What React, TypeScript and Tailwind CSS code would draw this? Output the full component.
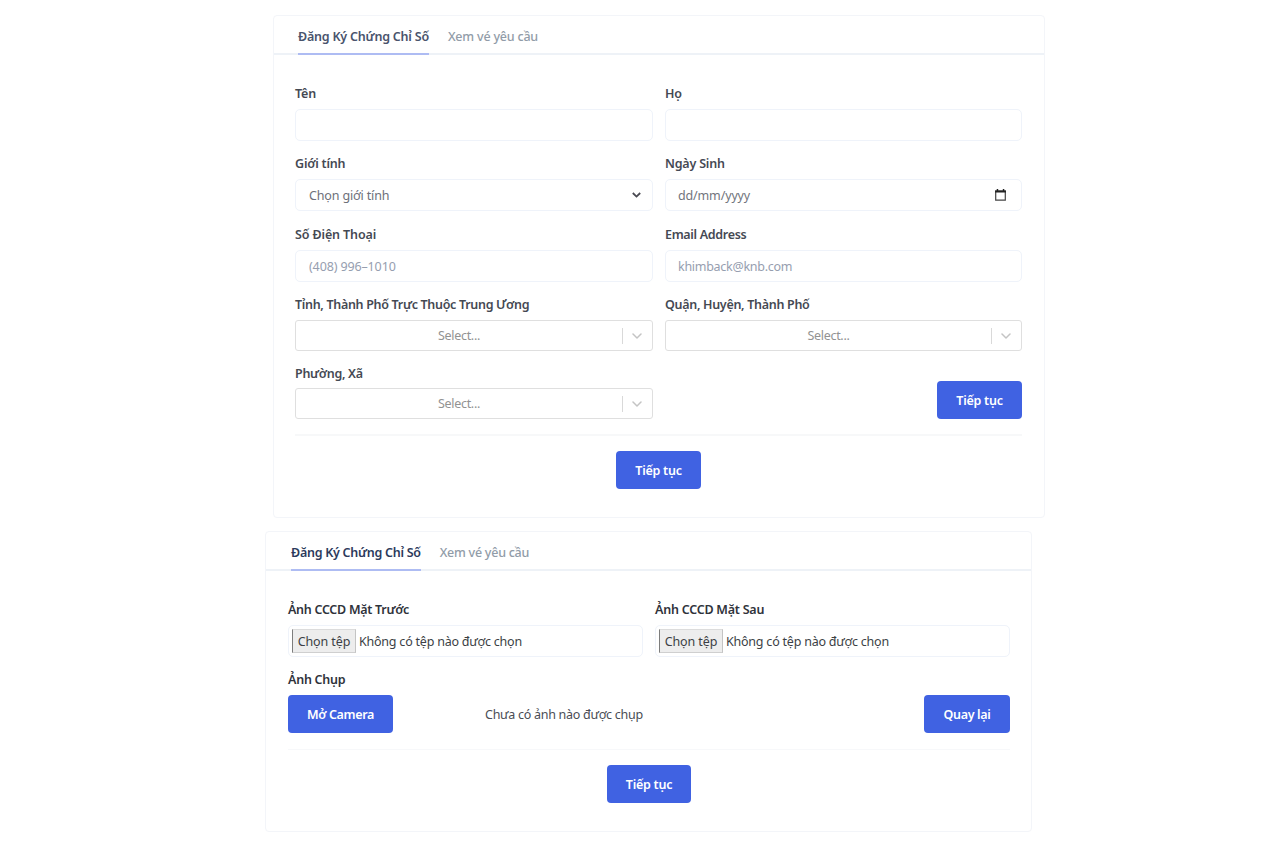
import type { ReactNode } from "react";

function Tabs({ active, muted }: { active: string; muted: string }) {
  return (
    <div className="flex h-[39px] shrink-0 items-stretch gap-[19px] border-b-2 border-[#eef2f7] pl-6 text-[12.5px] leading-[41px]">
      <div className={`-mb-[2px] h-[39px] border-b-2 border-[#aebcf3] font-semibold whitespace-nowrap ${active}`}>
        Đăng Ký Chứng Chỉ Số
      </div>
      <div className={`h-[37px] font-medium whitespace-nowrap ${muted}`}>Xem vé yêu cầu</div>
    </div>
  );
}

function Label({ children, className = "tracking-[-0.2px]" }: { children: ReactNode; className?: string }) {
  return (
    <div className={`flex h-5 items-center text-[12.5px] font-semibold whitespace-nowrap ${className}`}>
      {children}
    </div>
  );
}

function Box({ children, className = "" }: { children?: ReactNode; className?: string }) {
  return (
    <div className={`flex h-8 items-center rounded-[5px] border border-[#eff3fa] text-[12.5px] whitespace-nowrap ${className}`}>
      {children}
    </div>
  );
}

function SearchSelect() {
  return (
    <div className="flex h-[31px] items-center rounded-[3px] border border-[#dfdfdf] text-[12.5px] text-[#929292]">
      <div className="flex-1 pt-[2px] text-center tracking-[-0.3px]">Select...</div>
      <div className="h-4 w-px bg-[#d9d9d9]" />
      <div className="flex w-[29px] justify-center pr-px">
        <svg width="10" height="6" viewBox="0 0 10 6" fill="none" stroke="#c4c4c4" strokeWidth="1.5" strokeLinecap="round" strokeLinejoin="round">
          <path d="M1 1l4 4 4-4" />
        </svg>
      </div>
    </div>
  );
}

function Button({ children, className }: { children: ReactNode; className: string }) {
  return (
    <button
      type="button"
      className={`flex h-[38px] items-center justify-center rounded bg-[#4062e2] pt-[2px] text-[12.5px] font-semibold whitespace-nowrap text-white ${className}`}
    >
      {children}
    </button>
  );
}

function FileInput() {
  return (
    <Box className="gap-[3px] pl-[3px] text-[#3c3f45]">
      <span className="flex h-6 w-[64px] items-center justify-center border border-l-[#7d7d7d] border-t-[#dcdcdc] border-r-[#c4c4c4] border-b-[#cfcfcf] bg-[#ededed] pt-[2px] tracking-[-0.1px]">
        Chọn tệp
      </span>
      <span className="pt-[2px] tracking-[-0.22px]">Không có tệp nào được chọn</span>
    </Box>
  );
}

export default function App() {
  return (
    <main className="h-[857px] w-[1288px] overflow-hidden bg-white pt-[15px] pl-[265px] font-['Noto_Sans',sans-serif]">
      <section className="ml-2 flex h-[503px] w-[772px] flex-col rounded-[4px] border border-[#f3f5f9]">
        <Tabs active="text-[#49536c] tracking-[-0.21px]" muted="text-[#919ca8] tracking-[-0.2px]" />
        <div className="px-[21px] pr-[22px] pt-[29px] text-[#454953]">
          <div className="grid grid-cols-[358px_357px] gap-x-3">
            <div className="h-[70px]">
              <Label>Tên</Label>
              <Box className="mt-[5px]" />
            </div>
            <div className="h-[70px]">
              <Label>Họ</Label>
              <Box className="mt-[5px]" />
            </div>
            <div className="h-[71px]">
              <Label className="pt-px tracking-[-0.2px]">Giới tính</Label>
              <Box className="mt-[5px] justify-between pr-[11px] pl-[13px] text-[#6d7079]">
                <span className="pt-[2px] tracking-[-0.15px]">Chọn giới tính</span>
                <svg width="9" height="6" viewBox="0 0 9 6" fill="none" stroke="#4a4a52" strokeWidth="1.8">
                  <path d="M.8 1l3.7 3.6L8.200 1" />
                </svg>
              </Box>
            </div>
            <div className="h-[71px]">
              <Label className="pt-px tracking-[-0.2px]">Ngày Sinh</Label>
              <Box className="mt-[5px] justify-between pr-[15px] pl-3 text-[#72757d]">
                <span className="pt-[3px] tracking-[-0.15px]">dd/mm/yyyy</span>
                <svg width="11" height="12" viewBox="0 0 11 12" fill="none">
                  <path d="M.7 2h9.600v9.200H.7z" stroke="#444" strokeWidth="1.200" />
                  <path d="M.1 1.500h10.800v2H.1zM1.700 0h1.500v2H1.700zM7.800 0h1.500v2H7.800z" fill="#222" />
                </svg>
              </Box>
            </div>
            <div className="h-[70px]">
              <Label className="tracking-[-0.12px]">Số Điện Thoại</Label>
              <Box className="mt-[5px] pl-[13px] text-[#969eaf]">
                <span className="pt-[2px] tracking-[-0.13px]">(408) 996–1010</span>
              </Box>
            </div>
            <div className="h-[70px]">
              <Label className="tracking-[-0.31px]">Email Address</Label>
              <Box className="mt-[5px] pl-3 text-[#969eaf]">
                <span className="pt-[2px] tracking-[-0.28px]">khimback@knb.com</span>
              </Box>
            </div>
            <div className="h-[69px]">
              <Label className="mb-[5px] tracking-[-0.31px]">Tỉnh, Thành Phố Trực Thuộc Trung Ương</Label>
              <SearchSelect />
            </div>
            <div className="h-[69px]">
              <Label className="mb-[5px] tracking-[-0.3px]">Quận, Huyện, Thành Phố</Label>
              <SearchSelect />
            </div>
            <div>
              <Label className="mb-[4px] tracking-[-0.3px]">Phường, Xã</Label>
              <SearchSelect />
            </div>
            <div className="flex items-end justify-end">
              <Button className="w-[85px] tracking-[-0.25px]">Tiếp tục</Button>
            </div>
          </div>
          <div className="mt-[15px] border-b-2 border-[#f7f8f9]" />
          <Button className="mt-[15px] ml-[321px] w-[85px] tracking-[-0.25px]">Tiếp tục</Button>
        </div>
      </section>

      <section className="mt-[13px] flex h-[301px] w-[767px] flex-col rounded-[4px] border border-[#f3f5f9]">
        <Tabs active="ml-px text-[#2c3a5c] tracking-[-0.27px]" muted="text-[#919ca8] tracking-[-0.25px]" />
        <div className="pr-[22px] pl-[22px] pt-[28px] text-[#2f333b]">
          <div className="grid grid-cols-[355px_355px] gap-x-3">
            <div className="h-[70px]">
              <Label className="mb-[6px] pt-[2px] tracking-[-0.28px]">Ảnh CCCD Mặt Trước</Label>
              <FileInput />
            </div>
            <div className="h-[70px]">
              <Label className="mb-[6px] pt-[2px] tracking-[-0.23px]">Ảnh CCCD Mặt Sau</Label>
              <FileInput />
            </div>
          </div>
          <Label className="pt-[2px] tracking-[-0.25px]">Ảnh Chụp</Label>
          <div className="mt-[6px] flex w-[722px] items-center">
            <Button className="w-[105px] tracking-[-0.35px]">Mở Camera</Button>
            <span className="ml-[92px] pt-[2px] text-[12.5px] tracking-[-0.27px] whitespace-nowrap text-[#4a4d55]">
              Chưa có ảnh nào được chụp
            </span>
            <Button className="ml-auto w-[86px] tracking-[-0.35px]">Quay lại</Button>
          </div>
          <div className="mt-4 w-[722px] border-b border-[#f7f8fa]" />
          <Button className="mt-[15px] ml-[319px] w-[84px] tracking-[-0.25px]">Tiếp tục</Button>
        </div>
      </section>
    </main>
  );
}
